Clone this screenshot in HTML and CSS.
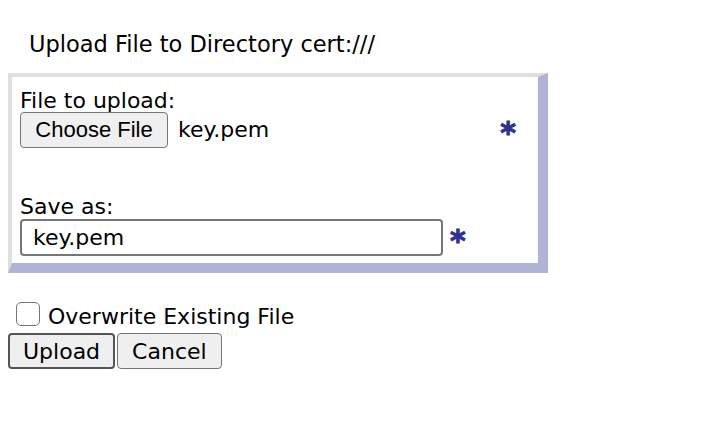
FILE: index.html
```html
<!DOCTYPE html>
<html>
<head>
<meta charset="utf-8">
<link rel="stylesheet" href="styles.css">
</head>
<body>
<div class="title">Upload File to Directory cert:///</div>
<div class="panel">
  <div class="label first-label">File to upload:</div>
  <div class="file-row">
    <div class="file-pick">
      <span class="choose-btn">Choose File</span>
      <span class="file-name">key.pem</span>
    </div>
    <span class="req">*</span>
  </div>
  <div class="label save-label">Save as:</div>
  <div class="save-row">
    <input class="text-input" type="text" value="key.pem">
    <span class="req">*</span>
  </div>
</div>
<label class="check-row">
  <span class="check-box"></span>
  <span class="check-text">Overwrite Existing File</span>
</label>
<div class="actions">
  <button class="btn btn-primary">Upload</button>
  <button class="btn">Cancel</button>
</div>
</body>
</html>
```

FILE: styles.css
```css
html, body {
  background: #ffffff;
}
body {
  margin: 8px;
  font-family: "DejaVu Sans", Verdana, sans-serif;
  font-size: 22px;
  line-height: 26px;
  color: #000000;
}
.title {
  margin-top: 23px;
  padding-left: 21px;
  font-size: 22.5px;
}
.panel {
  margin-top: 16px;
  width: 518px;
  border-style: solid;
  border-width: 4px 10px 10px 4px;
  border-color: #e0e0e0 #b0b3d6 #b0b3d6 #e0e0e0;
  padding: 8px 0 7px 8px;
}
.label {
  height: 26px;
}
.first-label {
  padding-top: 3px;
}
.file-row {
  display: flex;
  align-items: center;
  justify-content: space-between;
  margin-top: -2px;
  padding-right: 22px;
}
.file-pick {
  display: flex;
  align-items: center;
  gap: 10px;
}
.choose-btn {
  display: inline-flex;
  align-items: center;
  justify-content: center;
  box-sizing: border-box;
  width: 148px;
  height: 36px;
  font-family: "Liberation Sans", Arial, sans-serif;
  font-size: 22px;
  background: #efefef;
  border: 1px solid #767676;
  border-radius: 4px;
}
.req {
  color: #2e3192;
  font-weight: bold;
  font-size: 30px;
  line-height: 26px;
  padding-top: 6px;
  -webkit-text-stroke: 1px #2e3192;
}
.save-label {
  margin-top: 46px;
}
.save-row {
  display: flex;
  align-items: center;
  gap: 7px;
  margin-top: -1px;
}
.text-input {
  box-sizing: border-box;
  width: 423px;
  height: 37px;
  margin: 0;
  padding: 0 11px;
  font-family: "DejaVu Sans", Verdana, sans-serif;
  font-size: 22px;
  color: #000;
  border: 2px solid #767676;
  border-radius: 4px;
  background: #fff;
}
.check-row {
  display: flex;
  align-items: center;
  gap: 8px;
  margin-top: 26px;
  padding-left: 8px;
}
.check-box {
  box-sizing: border-box;
  width: 24px;
  height: 24px;
  border: 1px solid #767676;
  border-radius: 5px;
  background: #fff;
}
.check-text {
  padding-top: 5px;
  margin-bottom: -2px;
}
.actions {
  display: flex;
  gap: 2px;
  margin-top: 5px;
}
.btn {
  box-sizing: border-box;
  height: 36px;
  padding: 0 14px;
  font-family: "DejaVu Sans", Verdana, sans-serif;
  font-size: 22px;
  color: #000;
  background: #efefef;
  border: 1px solid #767676;
  border-radius: 4px;
}
.btn-primary {
  padding: 0 13px;
  border: 2px solid #555555;
}
```
